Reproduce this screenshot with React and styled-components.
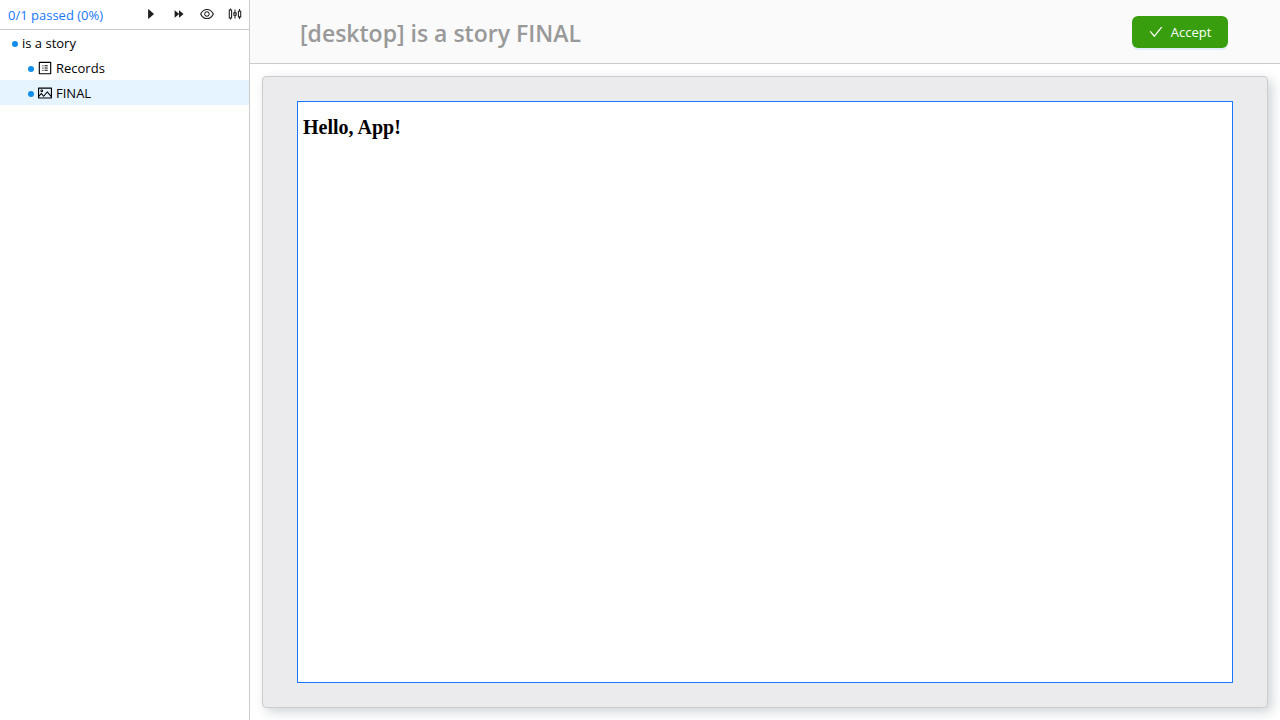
import React from "react";
import styled, { createGlobalStyle } from "styled-components";
import {
  AiFillCaretRight,
  AiFillForward,
  AiOutlineEye,
  AiOutlineSliders,
  AiOutlineCheck,
  AiOutlineProfile,
  AiOutlinePicture,
} from "react-icons/ai";

const GlobalStyle = createGlobalStyle`
  * { box-sizing: border-box; }
  body {
    margin: 0;
    background: #fff;
    color: #000;
    font-family: "Segoe UI", "Open Sans", "Noto Sans", sans-serif;
    font-size: 13px;
  }
`;

const Layout = styled.div`
  display: flex;
  min-height: 100vh;
`;

const Sidebar = styled.aside`
  flex: 0 0 250px;
  border-right: 1px solid #ccc;
`;

const Toolbar = styled.div`
  display: flex;
  align-items: flex-start;
  justify-content: space-between;
  height: 30px;
  padding-left: 8px;
  border-bottom: 1px solid #ccc;
`;

const Progress = styled.span`
  color: #1677ff;
  line-height: 30px;
  white-space: nowrap;
`;

const Actions = styled.div`
  display: flex;
`;

const IconButton = styled.button`
  display: flex;
  align-items: center;
  justify-content: center;
  width: 28px;
  height: 28px;
  padding: 0;
  border: 0;
  background: none;
  color: #1f1f1f;
  font-size: ${(p) => (p.$small ? 14 : 16)}px;
  cursor: pointer;
`;

const Tree = styled.ul`
  margin: 0;
  padding: 0;
  list-style: none;
`;

const Row = styled.li`
  display: flex;
  align-items: center;
  height: 25px;
  padding-left: ${(p) => 12 + p.$level * 16}px;
  background: ${(p) => (p.$selected ? "#e6f4ff" : "transparent")};
  cursor: pointer;

  svg {
    font-size: 16px;
    margin: 0 3px 0 -1px;
  }
`;

const Dot = styled.span`
  width: 6px;
  height: 6px;
  margin: 2px 4px 0 0;
  border-radius: 50%;
  background: #108ee9;
`;

const Main = styled.main`
  display: flex;
  flex: 1;
  flex-direction: column;
  min-width: 0;
`;

const Header = styled.header`
  display: flex;
  align-items: center;
  justify-content: space-between;
  height: 64px;
  padding: 0 52px 0 50px;
  border-bottom: 1px solid #ccc;
  background: #fafafa;
`;

const Title = styled.h1`
  margin: 0;
  padding-top: 2px;
  color: #999;
  font-size: 23px;
  font-weight: 600;
  line-height: 32px;
`;

const AcceptButton = styled.button`
  display: flex;
  align-items: center;
  justify-content: center;
  gap: 7px;
  height: 32px;
  padding: 0 16px 0 15px;
  min-width: 96px;
  border: 0;
  border-radius: 6px;
  background: #389e0d;
  box-shadow: 0 2px 0 rgba(5, 145, 255, 0.1);
  color: #fff;
  font-family: inherit;
  font-size: 13px;
  cursor: pointer;

  svg {
    font-size: 16px;
  }
`;

const Card = styled.section`
  display: flex;
  flex: 1;
  margin: 12px;
  padding: 24px 34px;
  border: 1px solid #ccc;
  border-radius: 4px;
  background: #ebebed;
  box-shadow: 4px 4px 12px rgba(16, 42, 67, 0.2);
`;

const Preview = styled.div`
  flex: 1;
  padding: 14px 5px;
  border: 1px solid #1677ff;
  background: #fff;
`;

const Heading = styled.h2`
  margin: 0;
  font-family: "Liberation Serif", "Times New Roman", serif;
  font-size: 20px;
  font-weight: 700;
  line-height: 22px;
`;

const toolbarActions = [
  { label: "Run", Icon: AiFillCaretRight, small: true },
  { label: "Run all", Icon: AiFillForward, small: true },
  { label: "Preview", Icon: AiOutlineEye },
  { label: "Settings", Icon: AiOutlineSliders },
];

const treeItems = [
  { label: "is a story", level: 0 },
  { label: "Records", level: 1, Icon: AiOutlineProfile },
  { label: "FINAL", level: 1, Icon: AiOutlinePicture, selected: true },
];

export default function App() {
  return (
    <>
      <GlobalStyle />
      <Layout>
        <Sidebar>
          <Toolbar>
            <Progress>0/1 passed (0%)</Progress>
            <Actions>
              {toolbarActions.map(({ label, Icon, small }) => (
                <IconButton key={label} type="button" aria-label={label} $small={small}>
                  <Icon />
                </IconButton>
              ))}
            </Actions>
          </Toolbar>
          <Tree>
            {treeItems.map(({ label, level, Icon, selected }) => (
              <Row key={label} $level={level} $selected={selected}>
                <Dot />
                {Icon && <Icon />}
                <span>{label}</span>
              </Row>
            ))}
          </Tree>
        </Sidebar>
        <Main>
          <Header>
            <Title>[desktop] is a story FINAL</Title>
            <AcceptButton type="button">
              <AiOutlineCheck />
              Accept
            </AcceptButton>
          </Header>
          <Card>
            <Preview>
              <Heading>Hello, App!</Heading>
            </Preview>
          </Card>
        </Main>
      </Layout>
    </>
  );
}
